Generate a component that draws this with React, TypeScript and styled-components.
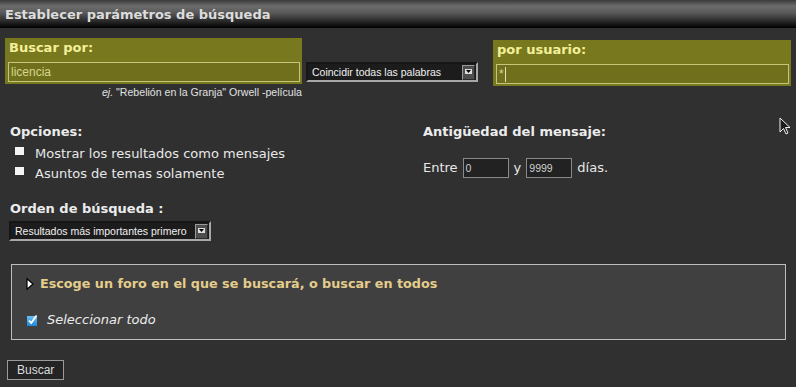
import React from 'react';
import styled, { createGlobalStyle } from 'styled-components';

const GlobalStyle = createGlobalStyle`
  html, body {
    margin: 0;
    padding: 0;
    background: #303030;
    min-height: 100%;
  }
  body {
    font-family: "DejaVu Sans", sans-serif;
    color: #e8e8e8;
  }
`;

const Page = styled.div`
  position: relative;
  width: 796px;
  height: 387px;
  background: #303030;
  overflow: hidden;
`;

const Header = styled.div`
  height: 28px;
  padding-left: 5px;
  box-sizing: border-box;
  background: linear-gradient(to bottom, #3c3c3c 0%, #6c6c6c 22%, #5a5a5a 45%, #2a2a2a 75%, #000 100%);
  font-size: 13px;
  font-weight: bold;
  line-height: 30px;
  color: #dcdcdc;
`;

const Content = styled.div`
  padding: 10px 5px 0 5px;
`;

const TopRow = styled.div`
  display: flex;
  align-items: flex-start;
`;

const LeftCol = styled.div`
  width: 297px;
  display: flex;
  flex-direction: column;
`;

const OliveBox = styled.div<{ $width: number; $offset?: number; $left?: number }>`
  width: ${p => p.$width}px;
  margin-top: ${p => p.$offset || 0}px;
  margin-left: ${p => p.$left || 0}px;
  box-sizing: border-box;
  background: #78781f;
  padding: 2px 2px 2px 3px;
`;

const BoxLabel = styled.div`
  font-size: 13px;
  font-weight: bold;
  line-height: 16px;
  color: #f4f09a;
  padding-left: 1px;
  margin-bottom: 6px;
`;

const OliveInput = styled.div`
  height: 20px;
  box-sizing: border-box;
  border: 1px solid #c6c67a;
  background: #6f6f1c;
  color: #d8d88c;
  font-family: "Liberation Sans", Arial, sans-serif;
  font-size: 12px;
  line-height: 18px;
  padding-left: 2px;
  display: flex;
  align-items: center;
`;

const Caret = styled.span`
  display: inline-block;
  width: 1px;
  height: 15px;
  margin-left: 1px;
  background: #e0e0c0;
`;

const Hint = styled.div`
  text-align: right;
  font-family: "Liberation Sans", Arial, sans-serif;
  font-size: 10.6px;
  line-height: 16px;
  color: #e0e0e0;
  em {
    font-style: italic;
  }
`;

const SelectBox = styled.div<{ $width: number; $top?: number; $left?: number }>`
  width: ${p => p.$width}px;
  height: 20px;
  margin-top: ${p => p.$top || 0}px;
  margin-left: ${p => p.$left || 0}px;
  box-sizing: border-box;
  border: 2px solid;
  border-color: #161616 #a8a8a8 #a8a8a8 #161616;
  background: #1c1c1c;
  display: flex;
  align-items: center;
  justify-content: space-between;
  padding: 0 1px 0 4px;
  font-family: "Liberation Sans", Arial, sans-serif;
  font-size: 10.5px;
  color: #f0f0f0;
  white-space: nowrap;
`;

const ArrowBox = styled.span`
  width: 13px;
  height: 15px;
  box-sizing: border-box;
  background: #4e4e4e;
  border: 1px solid;
  border-color: #9a9a9a #2a2a2a #2a2a2a #9a9a9a;
  display: flex;
  align-items: flex-start;
  justify-content: center;
  padding-top: 3px;
`;

const MidRow = styled.div`
  display: grid;
  grid-template-columns: 415px 1fr;
  margin-top: 24px;
  padding-left: 3px;
`;

const Column = styled.div`
  display: flex;
  flex-direction: column;
  align-items: flex-start;
`;

const SectionLabel = styled.div<{ $top?: number; $indent?: number }>`
  font-size: 13px;
  font-weight: bold;
  line-height: 16px;
  color: #ececec;
  margin-left: ${p => (p.$indent === undefined ? 2 : p.$indent)}px;
  margin-top: ${p => p.$top || 0}px;
`;

const CheckRow = styled.div<{ $first?: boolean }>`
  display: flex;
  align-items: flex-start;
  gap: 11px;
  padding-left: 7px;
  margin-top: ${p => (p.$first ? 4 : 0)}px;
  font-size: 13px;
  line-height: 20px;
  color: #e8e8e8;
`;

const Square = styled.span`
  width: 9px;
  height: 8px;
  margin-top: 3px;
  background: #f4f4f4;
  flex: none;
`;

const DaysRow = styled.div`
  display: flex;
  align-items: center;
  gap: 5px;
  margin-top: 18px;
  font-size: 13px;
  line-height: 20px;
  color: #e8e8e8;
`;

const SmallInput = styled.span`
  width: 46px;
  height: 20px;
  box-sizing: border-box;
  border: 1px solid #8a8a8a;
  background: #222;
  color: #cfcfcf;
  font-family: "Liberation Sans", Arial, sans-serif;
  font-size: 10.5px;
  line-height: 18px;
  padding-left: 2px;
`;

const ForumBox = styled.div`
  width: 775px;
  height: 76px;
  box-sizing: border-box;
  margin: 23px 0 0 6px;
  border: 1px solid #bdbdbd;
  background: #404040;
  padding: 11px 0 0 14px;
`;

const ForumTitle = styled.div`
  display: flex;
  align-items: center;
  gap: 6px;
  font-size: 12.75px;
  font-weight: bold;
  line-height: 16px;
  color: #e4cd8c;
`;

const SelectAll = styled.div`
  display: flex;
  align-items: center;
  gap: 9px;
  margin: 20px 0 0 1px;
  font-size: 13px;
  font-style: italic;
  line-height: 16px;
  color: #ececec;
`;

const Button = styled.div`
  display: inline-block;
  margin: 20px 0 0 2px;
  height: 20px;
  box-sizing: border-box;
  border: 1px solid #9a9a9a;
  background: #242424;
  padding: 0 9px;
  font-family: "Liberation Sans", Arial, sans-serif;
  font-size: 12px;
  line-height: 18px;
  color: #dcdcdc;
`;

const Pointer = styled.svg`
  position: absolute;
  left: 779px;
  top: 117px;
`;

const DownArrow = () => (
  <svg width="7" height="5" viewBox="0 0 7 5">
    <rect x="0" y="0" width="7" height="5" fill="#ddd" />
    <path d="M1 1 L6 1 L3.5 4 Z" fill="#000" />
  </svg>
);

const Select = ({ text, width, top, left }: { text: string; width: number; top?: number; left?: number }) => (
  <SelectBox $width={width} $top={top} $left={left}>
    <span>{text}</span>
    <ArrowBox>
      <DownArrow />
    </ArrowBox>
  </SelectBox>
);

const App: React.FC = () => {
  return (
    <Page>
      <GlobalStyle />
      <Header>Establecer parámetros de búsqueda</Header>
      <Content>
        <TopRow>
          <LeftCol>
            <OliveBox $width={297}>
              <BoxLabel>Buscar por:</BoxLabel>
              <OliveInput>licencia</OliveInput>
            </OliveBox>
            <Hint>
              <em>ej.</em> "Rebelión en la Granja" Orwell -película
            </Hint>
          </LeftCol>
          <Select text="Coincidir todas las palabras" width={172} top={24} left={4} />
          <OliveBox $width={298} $offset={2} $left={15}>
            <BoxLabel>por usuario:</BoxLabel>
            <OliveInput>
              *<Caret />
            </OliveInput>
          </OliveBox>
        </TopRow>

        <MidRow>
          <Column>
            <SectionLabel>Opciones:</SectionLabel>
            <CheckRow $first>
              <Square />
              Mostrar los resultados como mensajes
            </CheckRow>
            <CheckRow>
              <Square />
              Asuntos de temas solamente
            </CheckRow>
            <SectionLabel $top={17}>Orden de búsqueda :</SectionLabel>
            <Select text="Resultados más importantes primero" width={202} top={4} left={1} />
          </Column>
          <Column>
            <SectionLabel $indent={0}>Antigüedad del mensaje:</SectionLabel>
            <DaysRow>
              Entre
              <SmallInput>0</SmallInput>
              y
              <SmallInput>9999</SmallInput>
              días.
            </DaysRow>
          </Column>
        </MidRow>

        <ForumBox>
          <ForumTitle>
            <svg width="8" height="12" viewBox="0 0 8 12">
              <path d="M1 0.8 L7 6 L1 11.2 Z" fill="#fff" stroke="#000" strokeWidth="1.2" />
            </svg>
            Escoge un foro en el que se buscará, o buscar en todos
          </ForumTitle>
          <SelectAll>
            <svg width="11" height="11" viewBox="0 0 11 11">
              <defs>
                <linearGradient id="cb" x1="0" y1="0" x2="0" y2="1">
                  <stop offset="0" stopColor="#6cc0f5" />
                  <stop offset="1" stopColor="#1a86dc" />
                </linearGradient>
              </defs>
              <rect x="0" y="1" width="10" height="10" fill="url(#cb)" />
              <path d="M2 5.5 L4.2 8 L9.5 0.5" fill="none" stroke="#fff" strokeWidth="1.8" />
            </svg>
            Seleccionar todo
          </SelectAll>
        </ForumBox>

        <Button>Buscar</Button>
      </Content>

      <Pointer width="13" height="19" viewBox="0 0 13 19">
        <path d="M1 1 L1 15 L4.5 11.5 L7 17 L9 16 L6.5 10.5 L11 10.5 Z" fill="#1c1c1c" stroke="#f0f0f0" strokeWidth="1" />
      </Pointer>
    </Page>
  );
};

export default App;
